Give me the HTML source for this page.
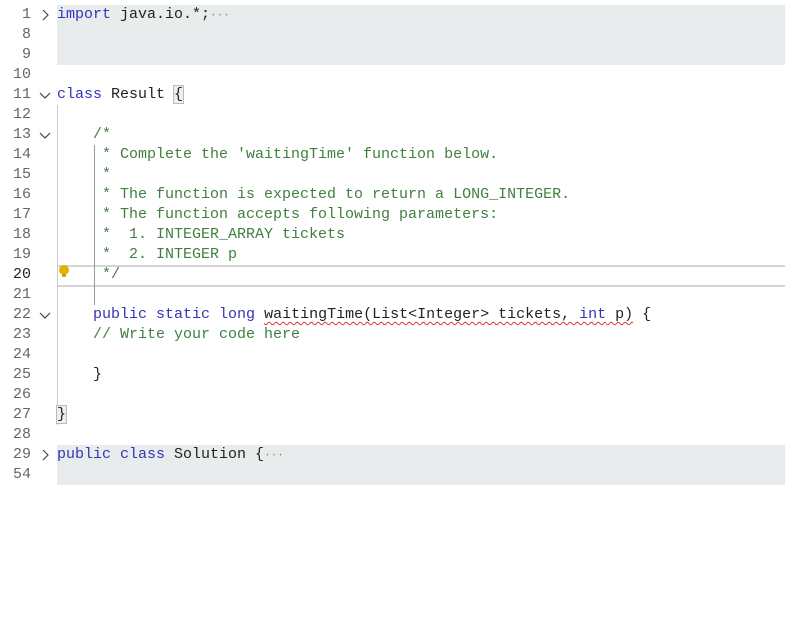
<!DOCTYPE html>
<html><head><meta charset="utf-8"><style>
body{margin:0;width:785px;height:629px;background:#fff;position:relative;overflow:hidden;font-family:"Liberation Mono",monospace;font-size:15px;}
.ln{position:absolute;left:0;width:31px;text-align:right;color:#666;height:20px;line-height:20px;}
.c{position:absolute;left:57px;white-space:pre;height:20px;line-height:20px;color:#222;}
.k{color:#3434b8}.g{color:#3f7f3f}
.fold{position:absolute;left:38px;width:14px;height:20px;}
.bg{position:absolute;left:57px;right:0;background:#e9eced;}
.sq{text-decoration:underline wavy #d33;text-decoration-thickness:1px;text-underline-offset:3px}
.dots{color:#888;font-size:11px}
</style></head><body>
<div class="bg" style="top:5px;height:60px"></div>
<div class="bg" style="top:445px;height:40px"></div>
<div style="position:absolute;left:57px;right:0;top:265px;height:18px;border-top:2px solid #d4d4d4;border-bottom:2px solid #d4d4d4;"></div>
<div style="position:absolute;left:57px;top:105px;width:1px;height:320px;background:#ccc"></div>
<div style="position:absolute;left:94px;top:145px;width:1px;height:160px;background:#999"></div>
<div style="position:absolute;left:59px;top:265px;width:10px;height:10px;border-radius:50%;background:#e8b000"></div>
<div style="position:absolute;left:62px;top:274px;width:4px;height:3px;background:#c9a040"></div>

<svg width="0" height="0" style="position:absolute"><defs>
<symbol id="r" viewBox="0 0 14 20"><path d="M5 5 L10 10 L5 15" fill="none" stroke="#444" stroke-width="1.2"/></symbol>
<symbol id="d" viewBox="0 0 14 20"><path d="M2 8 L7 13 L12 8" fill="none" stroke="#444" stroke-width="1.2"/></symbol>
</defs></svg>

<div class="ln" style="top:5px">1</div><svg class="fold" style="top:5px"><use href="#r"/></svg><div class="c" style="top:5px"><span class="k">import</span> java.io.*;<span class="dots">···</span></div>
<div class="ln" style="top:25px">8</div>
<div class="ln" style="top:45px">9</div>
<div class="ln" style="top:65px">10</div>
<div class="ln" style="top:85px">11</div><svg class="fold" style="top:85px"><use href="#d"/></svg><div class="c" style="top:85px"><span class="k">class</span> Result <span style="outline:1px solid #bbb;background:#eee">{</span></div>
<div class="ln" style="top:105px">12</div>
<div class="ln" style="top:125px">13</div><svg class="fold" style="top:125px"><use href="#d"/></svg><div class="c g" style="top:125px">    /*</div>
<div class="ln" style="top:145px">14</div><div class="c g" style="top:145px">     * Complete the 'waitingTime' function below.</div>
<div class="ln" style="top:165px">15</div><div class="c g" style="top:165px">     *</div>
<div class="ln" style="top:185px">16</div><div class="c g" style="top:185px">     * The function is expected to return a LONG_INTEGER.</div>
<div class="ln" style="top:205px">17</div><div class="c g" style="top:205px">     * The function accepts following parameters:</div>
<div class="ln" style="top:225px">18</div><div class="c g" style="top:225px">     *  1. INTEGER_ARRAY tickets</div>
<div class="ln" style="top:245px">19</div><div class="c g" style="top:245px">     *  2. INTEGER p</div>
<div class="ln" style="top:265px;color:#222">20</div><div class="c g" style="top:265px">     */</div>
<div class="ln" style="top:285px">21</div>
<div class="ln" style="top:305px">22</div><svg class="fold" style="top:305px"><use href="#d"/></svg><div class="c" style="top:305px">    <span class="k">public static long</span> <span class="sq">waitingTime(List&lt;Integer&gt; tickets, <span class="k">int</span> p)</span> {</div>
<div class="ln" style="top:325px">23</div><div class="c g" style="top:325px">    // Write your code here</div>
<div class="ln" style="top:345px">24</div>
<div class="ln" style="top:365px">25</div><div class="c" style="top:365px">    }</div>
<div class="ln" style="top:385px">26</div>
<div class="ln" style="top:405px">27</div><div class="c" style="top:405px"><span style="outline:1px solid #bbb;background:#eee">}</span></div>
<div class="ln" style="top:425px">28</div>
<div class="ln" style="top:445px">29</div><svg class="fold" style="top:445px"><use href="#r"/></svg><div class="c" style="top:445px"><span class="k">public class</span> Solution {<span class="dots">···</span></div>
<div class="ln" style="top:465px">54</div>
</body></html>
